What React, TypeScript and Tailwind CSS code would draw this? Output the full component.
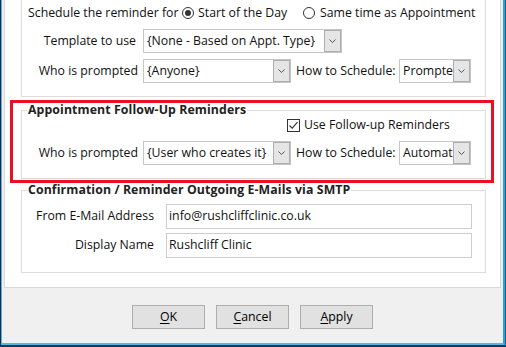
import type { ReactNode } from 'react'

const font = { fontFamily: '"Open Sans", "Noto Sans", sans-serif' }

function Chevron() {
  return (
    <svg width="7" height="4" viewBox="0 0 7 4" fill="none">
      <path d="M0.5 0.5 L3.5 3.5 L6.5 0.5" stroke="#555" strokeWidth="1" />
    </svg>
  )
}

function Combo({ value, width }: { value: string; width: string }) {
  return (
    <div className={`${width} h-[24px] flex items-stretch border border-[#c6c6c6] bg-white shrink-0`}>
      <div className="flex-1 min-w-0 overflow-hidden whitespace-nowrap pl-[3px] flex items-center">{value}</div>
      <div className="w-[17px] shrink-0 flex items-center justify-center border border-[#adadad] bg-[#e5e5e5]">
        <Chevron />
      </div>
    </div>
  )
}

function Input({ value }: { value: string }) {
  return (
    <div className="w-[306px] h-[25px] flex items-center border border-[#cdcdcd] bg-white pl-[2px] whitespace-nowrap overflow-hidden">
      {value}
    </div>
  )
}

function Radio({ checked }: { checked?: boolean }) {
  return (
    <div className="w-[12px] h-[12px] rounded-full border border-[#333] bg-white flex items-center justify-center shrink-0">
      {checked && <div className="w-[6px] h-[6px] rounded-full bg-[#333]" />}
    </div>
  )
}

function Group({ title, className, children }: { title: string; className: string; children: ReactNode }) {
  return (
    <fieldset className={`border border-[#dcdcdc] px-[5px] ${className}`}>
      <legend className="px-[1px] font-bold leading-[14px] tracking-[0.1px] text-[#222]">{title}</legend>
      {children}
    </fieldset>
  )
}

function Button({ mn, rest }: { mn: string; rest: string }) {
  return (
    <button className="w-[73px] h-[24px] border border-[#adadad] bg-[#e1e1e1] text-[12.3px] text-black flex items-center justify-center">
      <span>
        <span className="underline underline-offset-[1.5px]">{mn}</span>
        {rest}
      </span>
    </button>
  )
}

export default function App() {
  return (
    <div
      className="w-[506px] h-[347px] flex flex-col bg-[#f0f0f0] border-l border-l-[#13304d] border-r border-r-[#1f5f8f] border-b-2 border-b-[#16385a] text-[12.3px] text-[#111]"
      style={font}
    >
      <div className="flex-1 flex flex-col border-l border-l-[#6aa9dc] border-r-2 border-r-[#22a3e4] border-b-2 border-b-[#5ab5e9]">
        {/* tab page */}
        <div className="h-[288px] ml-[2px] mr-[2px] bg-white border-l border-r border-b border-[#d9d9d9] flex flex-col">
          {/* reminder group, top cut off */}
          <div className="ml-[16px] mr-[14px] border-l border-r border-b border-[#dcdcdc] pl-[6px] pt-[3px] pb-[13px]">
            <div className="flex items-center h-[20px] whitespace-nowrap">
              <span className="w-[154px]">Schedule the reminder for</span>
              <Radio checked />
              <span className="ml-[4px] w-[105px]">Start of the Day</span>
              <Radio />
              <span className="ml-[5px]">Same time as Appointment</span>
            </div>
            <div className="flex items-center h-[24px] mt-[6px] whitespace-nowrap">
              <span className="w-[108px] text-right">Template to use</span>
              <div className="ml-[7px]">
                <Combo value="{None - Based on Appt. Type}" width="w-[199px]" />
              </div>
            </div>
            <div className="flex items-center h-[24px] mt-[6px] whitespace-nowrap">
              <span className="w-[110px] text-right">Who is prompted</span>
              <div className="ml-[5px]">
                <Combo value="{Anyone}" width="w-[148px]" />
              </div>
              <span className="ml-[5px] w-[99px]">How to Schedule:</span>
              <div className="ml-[4px]">
                <Combo value="Prompte" width="w-[72px]" />
              </div>
            </div>
          </div>

          {/* highlighted follow-up group */}
          <div className="mt-[3px] ml-[5px] mr-[6px] border-[3px] border-[#e81123] pb-[1px]">
            <Group title="Appointment Follow-Up Reminders" className="ml-[8px] mr-[5px] pb-[13px]">
              <div className="flex items-center h-[16px] whitespace-nowrap">
                <div className="ml-[260px] w-[13px] h-[13px] border border-[#333] bg-white flex items-center justify-center shrink-0">
                  <svg width="11" height="11" viewBox="0 0 11 11" fill="none">
                    <path d="M1.5 5.5 L4.2 8.2 L9.5 2.2" stroke="#333" strokeWidth="1.1" />
                  </svg>
                </div>
                <span className="ml-[4px]">Use Follow-up Reminders</span>
              </div>
              <div className="flex items-center h-[24px] mt-[8px] whitespace-nowrap">
                <span className="w-[111px] text-right">Who is prompted</span>
                <div className="ml-[5px]">
                  <Combo value="{User who creates it}" width="w-[148px]" />
                </div>
                <span className="ml-[5px] w-[99px]">How to Schedule:</span>
                <div className="ml-[4px]">
                  <Combo value="Automat" width="w-[72px]" />
                </div>
              </div>
            </Group>
          </div>

          <Group title="Confirmation / Reminder Outgoing E-Mails via SMTP" className="ml-[16px] mr-[14px] pb-[14px]">
            <div className="flex items-center mt-[7px] whitespace-nowrap">
              <span className="w-[127px] text-right">From E-Mail Address</span>
              <div className="ml-[12px]">
                <Input value="info@rushcliffclinic.co.uk" />
              </div>
            </div>
            <div className="flex items-center mt-[4px] whitespace-nowrap">
              <span className="w-[127px] text-right">Display Name</span>
              <div className="ml-[12px]">
                <Input value="Rushcliff Clinic" />
              </div>
            </div>
          </Group>
        </div>

        {/* dialog buttons */}
        <div className="flex-1 flex items-start gap-[11px] pt-[17px] pl-[130px]" style={font}>
          <Button mn="O" rest="K" />
          <Button mn="C" rest="ancel" />
          <Button mn="A" rest="pply" />
        </div>
      </div>
    </div>
  )
}
